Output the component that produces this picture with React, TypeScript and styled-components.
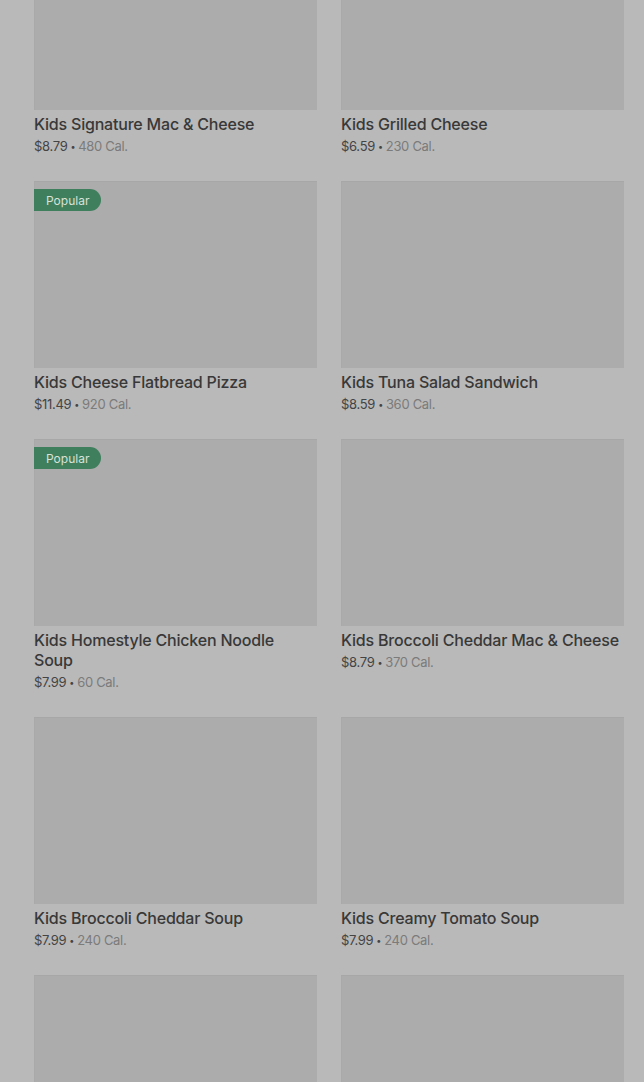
import styled, { createGlobalStyle } from 'styled-components'

const GlobalStyle = createGlobalStyle`
  html, body {
    margin: 0;
    padding: 0;
    background: #b9b9b9;
    overflow: hidden;
  }
  body {
    font-family: Inter, "Noto Sans", sans-serif;
    -webkit-font-smoothing: antialiased;
  }
`

const Page = styled.div`
  height: 1082px;
  overflow: hidden;
  background: #b9b9b9;
`

const Grid = styled.div`
  display: grid;
  grid-template-columns: 283px 283px;
  column-gap: 24px;
  row-gap: 25px;
  align-items: start;
  padding: 0 20px 0 34px;
  margin-top: -77px;
`

const Card = styled.div`
  display: flex;
  flex-direction: column;
`

const Thumb = styled.div`
  position: relative;
  height: 187px;
  background: #acacac;
  box-shadow: inset 0 1px 0 #a7a7a7, inset 1px 0 0 #a9a9a9;
  margin-bottom: 4px;
`

const Badge = styled.span`
  position: absolute;
  top: 8px;
  left: 0;
  height: 22px;
  padding: 0 12px;
  display: flex;
  align-items: center;
  background: #3f7f5d;
  color: #d6e2db;
  font-size: 12px;
  border-radius: 0 11px 11px 0;
`

const Title = styled.div`
  font-size: 16px;
  font-weight: 500;
  line-height: 20px;
  letter-spacing: -0.2px;
  color: #383838;
  padding-right: 4px;
  margin-bottom: 2px;
`

const Meta = styled.div`
  box-sizing: border-box;
  height: 20px;
  padding-top: 1px;
  font-size: 13px;
  line-height: 19px;
  color: #444;
  letter-spacing: -0.3px;
`

const Dot = styled.span`
  font-size: 9px;
  line-height: 0;
  margin: 0 3px;
  position: relative;
  top: -1px;
`

const Cal = styled.span`
  color: #7b7b7b;
`

type Item = { name: string; price?: string; cal?: string; popular?: boolean }

const items: Item[] = [
  { name: 'Kids Signature Mac & Cheese', price: '$8.79', cal: '480 Cal.' },
  { name: 'Kids Grilled Cheese', price: '$6.59', cal: '230 Cal.' },
  { name: 'Kids Cheese Flatbread Pizza', price: '$11.49', cal: '920 Cal.', popular: true },
  { name: 'Kids Tuna Salad Sandwich', price: '$8.59', cal: '360 Cal.' },
  { name: 'Kids Homestyle Chicken Noodle Soup', price: '$7.99', cal: '60 Cal.', popular: true },
  { name: 'Kids Broccoli Cheddar Mac & Cheese', price: '$8.79', cal: '370 Cal.' },
  { name: 'Kids Broccoli Cheddar Soup', price: '$7.99', cal: '240 Cal.' },
  { name: 'Kids Creamy Tomato Soup', price: '$7.99', cal: '240 Cal.' },
  { name: '' },
  { name: '' },
]

export default function App() {
  return (
    <Page>
      <GlobalStyle />
      <Grid>
        {items.map((it, i) => (
          <Card key={i}>
            <Thumb>{it.popular && <Badge>Popular</Badge>}</Thumb>
            {it.name && <Title>{it.name}</Title>}
            {it.price && (
              <Meta>
                {it.price}
                <Dot>•</Dot>
                <Cal>{it.cal}</Cal>
              </Meta>
            )}
          </Card>
        ))}
      </Grid>
    </Page>
  )
}
